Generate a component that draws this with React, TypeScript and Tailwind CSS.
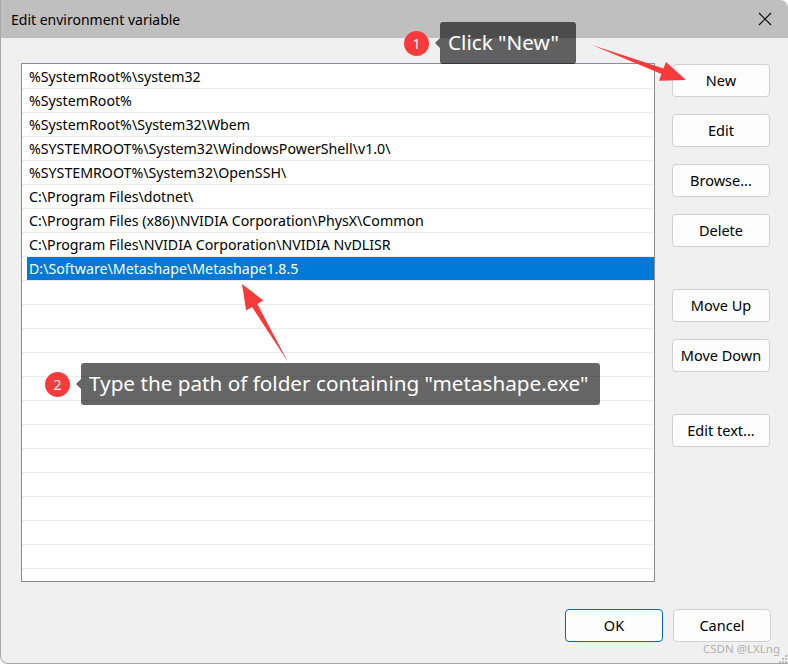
const paths = [
  "%SystemRoot%\\system32",
  "%SystemRoot%",
  "%SystemRoot%\\System32\\Wbem",
  "%SYSTEMROOT%\\System32\\WindowsPowerShell\\v1.0\\",
  "%SYSTEMROOT%\\System32\\OpenSSH\\",
  "C:\\Program Files\\dotnet\\",
  "C:\\Program Files (x86)\\NVIDIA Corporation\\PhysX\\Common",
  "C:\\Program Files\\NVIDIA Corporation\\NVIDIA NvDLISR",
  "D:\\Software\\Metashape\\Metashape1.8.5",
]

const rows = [...paths, ...Array(12).fill("")]

function Btn({ label, primary }: { label: string; primary?: boolean }) {
  return (
    <button
      className={
        "h-[33px] w-[98px] rounded-[4px] bg-[#fdfdfd] text-[14.5px] text-black " +
        (primary ? "border border-[#0067c0]" : "border border-[#d0d0d0]")
      }
    >
      {label}
    </button>
  )
}

function Badge({ n }: { n: number }) {
  return (
    <div className="flex h-[25px] w-[25px] items-center justify-center rounded-full bg-[#f73b3b] text-[14px] text-white">
      {n}
    </div>
  )
}

function Callout({ text, w }: { text: string; w: string }) {
  return (
    <div className={"relative flex h-[42px] items-center rounded-[3px] bg-black/60 pl-[8px] text-[20.7px] text-white " + w}>
      <div className="absolute left-[-5px] top-1/2 h-0 w-0 -translate-y-1/2 border-y-[5px] border-r-[5px] border-y-transparent border-r-black/60" />
      {text}
    </div>
  )
}

export default function App() {
  return (
    <div
      className="relative h-[664px] w-[788px] overflow-hidden bg-white"
      style={{ fontFamily: '"Noto Sans", "Liberation Sans", sans-serif' }}
    >
      <div className="flex h-full w-full flex-col overflow-hidden rounded-tr-[8px] rounded-bl-[8px] border-b border-l border-[#a8a8a8] bg-[#f0f0f0]">
        {/* title bar */}
        <div className="flex h-[38px] shrink-0 items-center justify-between bg-[#bfbfbf] pl-[10px] pr-[16px]">
          <span className="text-[14px] text-black">Edit environment variable</span>
          <svg width="14" height="14" viewBox="0 0 14 14">
            <path d="M1 1L13 13M13 1L1 13" stroke="#111" strokeWidth="1.2" />
          </svg>
        </div>

        <div className="flex gap-[17px] pl-[20px] pt-[25px]">
          {/* list */}
          <div className="h-[519px] w-[634px] overflow-hidden border border-[#8a8a99] bg-white pt-px">
            {rows.map((r, i) => (
              <div key={i} className="h-[24px] border-b border-[#ececec]">
                <div
                  className={
                    "ml-[5px] flex h-full items-center pl-[2px] pt-px text-[14.2px] " +
                    (i === 8 ? "bg-[#0078d7] text-white" : "text-black")
                  }
                >
                  {r}
                </div>
              </div>
            ))}
          </div>

          {/* side buttons */}
          <div className="mt-px flex flex-col">
            <div className="flex flex-col gap-[17px]">
              <Btn label="New" />
              <Btn label="Edit" />
              <Btn label="Browse..." />
              <Btn label="Delete" />
            </div>
            <div className="mt-[42px] flex flex-col gap-[17px]">
              <Btn label="Move Up" />
              <Btn label="Move Down" />
            </div>
            <div className="mt-[42px]">
              <Btn label="Edit text..." />
            </div>
          </div>
        </div>

        <div className="mt-[27px] flex justify-end gap-[10px] pr-[17px]">
          <Btn label="OK" primary />
          <Btn label="Cancel" />
        </div>
      </div>

      {/* watermark + grip */}
      <div className="absolute left-[703px] top-[640px] text-[11.5px] text-[#b0b0b0]">CSDN @LXLng</div>
      <svg className="absolute left-[778px] top-[654px]" width="10" height="10" viewBox="0 0 10 10">
        <rect x="7" y="1" width="2" height="2" fill="#c0c0c0" />
        <rect x="4" y="4" width="2" height="2" fill="#c0c0c0" />
        <rect x="7" y="4" width="2" height="2" fill="#c0c0c0" />
        <rect x="1" y="7" width="2" height="2" fill="#c0c0c0" />
        <rect x="4" y="7" width="2" height="2" fill="#c0c0c0" />
        <rect x="7" y="7" width="2" height="2" fill="#c0c0c0" />
      </svg>

      {/* annotations */}
      <div className="absolute left-[404px] top-[22px] flex items-center gap-[11px]">
        <Badge n={1} />
        <Callout text={'Click "New"'} w="w-[136px]" />
      </div>
      <div className="absolute left-[45px] top-[363px] flex items-center gap-[11px]">
        <Badge n={2} />
        <Callout text={'Type the path of folder containing "metashape.exe"'} w="w-[519px]" />
      </div>

      <svg className="pointer-events-none absolute left-0 top-0" width="788" height="664">
        <polygon points="592,45 663.5,68.5 666,61.9 686,80 659,80.7 661.5,74.1" fill="#f83a3a" />
        <polygon points="288,362 257.3,304 263.3,300.5 242,284 246.1,310.6 252.1,307" fill="#f83a3a" />
      </svg>
    </div>
  )
}
